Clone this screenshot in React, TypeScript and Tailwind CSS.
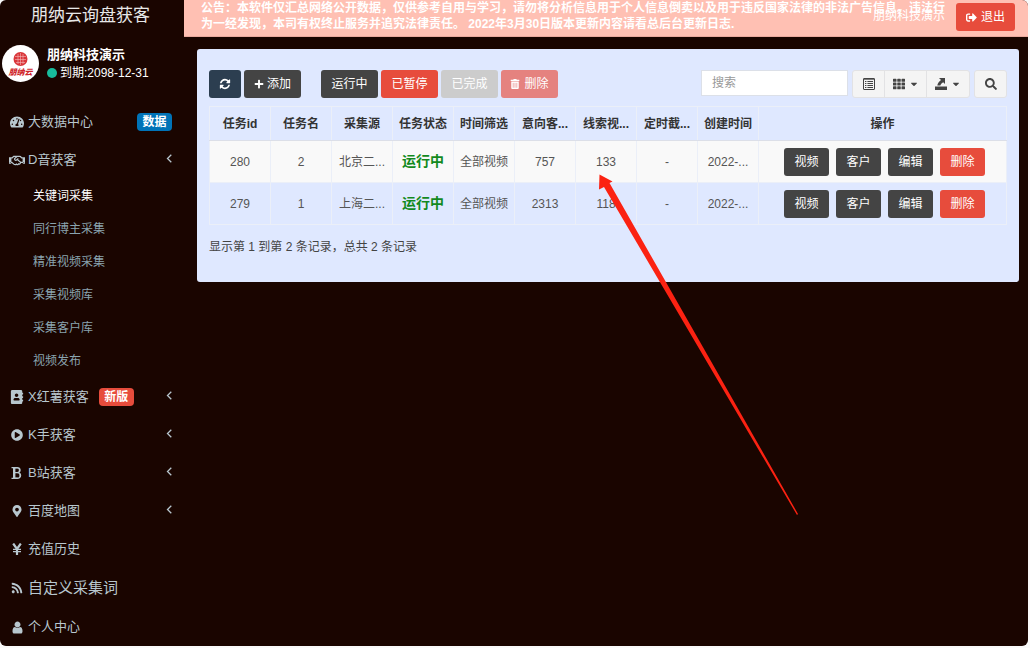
import type { ReactNode } from 'react';
import {
  FaAddressBook,
  FaCaretDown,
  FaMapMarkerAlt,
  FaPlayCircle,
  FaPlus,
  FaRegHandshake,
  FaRss,
  FaSearch,
  FaSignOutAlt,
  FaTachometerAlt,
  FaTh,
  FaTrashAlt,
} from 'react-icons/fa';

type NavItem = {
  label: string;
  icon: ReactNode;
  badge?: string;
  arrow?: boolean;
  large?: boolean;
  children?: string[];
};

const UserIcon = () => (
  <svg className="w-[13px] h-[13px]" viewBox="128 64 1536 1664" fill="currentColor">
    <path d="M1536 1399q0 109-62.5 187t-150.5 78h-854q-88 0-150.500-78t-62.500-187q0-85 8.500-160.500t31.500-152 58.500-131 94-89 134.500-34.500q131 128 313 128t313-128q76 0 134.500 34.500t94 89 58.500 131 31.500 152 8.500 160.500zm-256-887q0 159-112.500 271.500t-271.500 112.500-271.500-112.500-112.500-271.500 112.500-271.500 271.500-112.500 271.500 112.500 112.500 271.500z" />
  </svg>
);

const BoldIcon = () => (
  <svg className="w-3 h-3" viewBox="0 0 12 12" fill="none" stroke="currentColor">
    <path d="M0.500 0.700h6M0.500 11.300h6" strokeWidth="1.200" />
    <path d="M3.200 0.700v10.600" strokeWidth="2.400" />
    <path d="M4 0.700h2.200c3.600 0 3.600 4.900 0 4.900H4M6.200 5.600c4.400 0 4.400 5.700 0 5.700H4" strokeWidth="1.400" />
    <path d="M8.500 1.800v2.800M9.200 7v3" strokeWidth="1.400" />
  </svg>
);

const YenIcon = () => (
  <svg className="w-3 h-3" viewBox="0 0 12 12" fill="none" stroke="currentColor">
    <path d="M2.200 0.500L6 6L9.800 0.500M6 5.500V12" strokeWidth="2.200" />
    <path d="M2 6.300h8M2 8.600h8" strokeWidth="1.200" />
  </svg>
);

const ChevronIcon = () => (
  <svg className="w-[7px] h-[9px] ml-auto mb-1 -mr-px" viewBox="0 0 7 9" fill="none" stroke="currentColor" strokeWidth="1.300">
    <path d="M5.300 0.800L1.500 4.500L5.300 8.200" />
  </svg>
);

const RefreshIcon = () => (
  <svg className="w-3 h-3" viewBox="0 0 1792 1792" fill="currentColor">
    <path d="M1639 1056q0 5-1 7-64 268-268 434.5t-478 166.5q-146 0-282.5-55t-243.5-157l-129 129q-19 19-45 19t-45-19-19-45v-448q0-26 19-45t45-19h448q26 0 45 19t19 45-19 45l-137 137q71 66 161 102t187 36q134 0 250-65t186-179q11-17 53-117 8-23 30-23h192q13 0 22.5 9.5t9.5 22.5zm25-800v448q0 26-19 45t-45 19h-448q-26 0-45-19t-19-45 19-45l138-138q-148-137-349-137-134 0-250 65t-186 179q-11 17-53 117-8 23-30 23h-199q-13 0-22.5-9.5t-9.5-22.5v-7q65-268 270-434.5t480-166.5q146 0 284 55.5t245 156.5l130-129q19-19 45-19t45 19 19 45z" />
  </svg>
);

const ListIcon = () => (
  <svg className="w-3 h-3" viewBox="0 0 12 12" fill="none" stroke="currentColor">
    <rect x="0.5" y="0.5" width="11" height="11" rx="0.5" />
    <path d="M0.5 1.2h11M2 3.5h1.4M2 5.5h1.4M2 7.5h1.4M2 9.5h1.4M4.4 3.5h5.6M4.4 5.5h5.6M4.4 7.5h5.6M4.4 9.5h5.6" />
  </svg>
);

const ExportIcon = () => (
  <svg className="w-3 h-3" viewBox="0 0 12 12" fill="currentColor">
    <path d="M4 0h6v6L8.200 4.300C6.600 5.400 5.700 6.400 5.300 7.600H2.300C2.600 5.600 4 3.700 6 2.100zM0 8.500h12V12H0z" />
  </svg>
);

const Logo = () => (
  <svg className="w-[37px] h-[37px] shrink-0" viewBox="0 0 37 37" role="img" aria-label="朋纳云">
    <circle cx="18.500" cy="18.500" r="18.500" fill="#fff" />
    <circle cx="18.500" cy="14" r="7" fill="#d9363a" />
    <path d="M13 11.500h11M13 14.500h11M14 17.500h9M16 9v10M18.500 8v12M21 9v10" stroke="#f5b8b8" strokeWidth="0.600" fill="none" />
    <text x="18.500" y="30" textAnchor="middle" fontSize="8" fontWeight="900" fontStyle="italic" fill="#d0262b">
      朋纳云
    </text>
  </svg>
);

const navItems: NavItem[] = [
  { label: '大数据中心', icon: <FaTachometerAlt size={14} />, badge: '数据' },
  {
    label: 'D音获客',
    icon: <FaRegHandshake size={17} />,
    arrow: true,
    children: ['关键词采集', '同行博主采集', '精准视频采集', '采集视频库', '采集客户库', '视频发布'],
  },
  { label: 'X红薯获客', icon: <FaAddressBook size={14} />, badge: '新版', arrow: true },
  { label: 'K手获客', icon: <FaPlayCircle size={12} />, arrow: true },
  { label: 'B站获客', icon: <BoldIcon />, arrow: true },
  { label: '百度地图', icon: <FaMapMarkerAlt size={12} />, arrow: true },
  { label: '充值历史', icon: <YenIcon /> },
  { label: '自定义采集词', icon: <FaRss size={12} />, large: true },
  { label: '个人中心', icon: <UserIcon /> },
];

const columns = ['任务id', '任务名', '采集源', '任务状态', '时间筛选', '意向客...', '线索视...', '定时截...', '创建时间'];

const tasks = [
  { id: 280, name: '2', source: '北京二...', status: '运行中', range: '全部视频', leads: 757, videos: 133, deadline: '-', created: '2022-...' },
  { id: 279, name: '1', source: '上海二...', status: '运行中', range: '全部视频', leads: 2313, videos: 118, deadline: '-', created: '2022-...' },
];

const Sidebar = () => (
  <aside className="w-[184px] shrink-0 text-[#b8c7ce]">
    <h1 className="h-8 pl-[31px] text-[17px] leading-8 text-[#e8e8e8]">朋纳云询盘获客</h1>
    <div className="flex items-center gap-2 h-[71px] pt-[13px] pb-[21px] pl-0.5 text-white">
      <Logo />
      <div className="text-[12px] leading-[19px]">
        <p className="text-[13px] font-bold">朋纳科技演示</p>
        <p className="flex items-center gap-[3px]">
          <span className="w-2.5 h-2.5 rounded-full bg-[#18bc9c]" />
          到期:2098-12-31
        </p>
      </div>
    </div>
    <nav>
      {navItems.map((item) => (
        <div key={item.label}>
          <a
            href="#"
            className={`flex items-center pl-[9px] pr-3 ${item.large ? 'h-10 text-[15px]' : 'h-[38px] text-[13px]'}`}
          >
            <span className="flex justify-center w-4 mr-[3px] shrink-0">{item.icon}</span>
            {item.label}
            {item.badge && (
              <span
                className={`flex items-center justify-center w-[35px] h-[18px] rounded-sm text-[12px] font-bold text-white ${
                  item.arrow ? 'ml-2.5 bg-[#e74c3c]' : 'ml-auto bg-[#0073b7]'
                }`}
              >
                {item.badge}
              </span>
            )}
            {item.arrow && <ChevronIcon />}
          </a>
          {item.children && (
            <ul className="pb-px text-[12px] text-[#8aa4af]">
              {item.children.map((child, i) => (
                <li key={child}>
                  <a href="#" className={`flex items-center h-[33px] pl-[33px] ${i === 0 ? 'text-white' : ''}`}>
                    {child}
                  </a>
                </li>
              ))}
            </ul>
          )}
        </div>
      ))}
    </nav>
  </aside>
);

const Header = () => (
  <header className="relative flex items-start h-[37px] pl-[17px] pr-[13px] border-b border-[#e9a99d] bg-[#ffc0b3] text-[12px] text-white">
    <p className="flex-1 pr-1 font-bold leading-4">
      公告：本软件仅汇总网络公开数据，仅供参考自用与学习，请勿将分析信息用于个人信息倒卖以及用于违反国家法律的非法广告信息。违法行为一经发现，本司有权终止服务并追究法律责任。
      2022年3月30日版本更新内容请看总后台更新日志.
    </p>
    <a href="#" className="absolute right-[83px] top-2 leading-4">
      朋纳科技演示
    </a>
    <button className="flex items-center justify-center gap-1 w-[59px] h-7 mt-[3px] rounded-[3px] bg-[#e74c3c]">
      <FaSignOutAlt size={11} />
      退出
    </button>
  </header>
);

const Toolbar = () => (
  <div className="flex items-start text-[12px] text-white">
    <button aria-label="刷新" className="flex items-center justify-center w-8 h-7 rounded-[3px] bg-[#2c3e50]">
      <RefreshIcon />
    </button>
    <button className="flex items-center justify-center gap-[3px] w-[57px] h-7 ml-[3px] rounded-[3px] bg-[#444]">
      <FaPlus size={10} />
      添加
    </button>
    <div className="flex gap-[3px] ml-5">
      <button className="w-[57px] h-7 rounded-[3px] bg-[#444]">运行中</button>
      <button className="w-[57px] h-7 rounded-[3px] bg-[#e74c3c]">已暂停</button>
      <button disabled className="w-[57px] h-7 rounded-[3px] bg-[#ccc]">已完成</button>
      <button disabled className="flex items-center justify-center gap-1 w-[57px] h-7 rounded-[3px] bg-[#e5827f]">
        <FaTrashAlt size={10} />
        删除
      </button>
    </div>
    <input
      type="text"
      aria-label="搜索"
      placeholder="搜索"
      className="w-[147px] h-[26px] ml-auto px-2.5 border border-[#dce0e8] bg-white text-[#444] placeholder:text-[#999]"
    />
    <div className="flex h-7 ml-1 border border-[#e2e2e4] rounded-[3px] bg-[#f4f4f4] text-[#444] divide-x divide-[#e2e2e4]">
      <button aria-label="切换视图" className="flex items-center justify-center w-8">
        <ListIcon />
      </button>
      <button aria-label="列" className="flex items-center justify-center gap-1 w-[42px]">
        <FaTh size={12} />
        <FaCaretDown size={10} />
      </button>
      <button aria-label="导出" className="flex items-center justify-center gap-1 w-[42px]">
        <ExportIcon />
        <FaCaretDown size={10} />
      </button>
    </div>
    <button
      aria-label="普通搜索"
      className="flex items-center justify-center w-[33px] h-7 ml-1 border border-[#e2e2e4] rounded-[3px] bg-[#f4f4f4] text-[#444]"
    >
      <FaSearch size={12} />
    </button>
  </div>
);

const TaskTable = () => (
  <table className="w-full mt-2 table-fixed border-collapse text-center text-[12px] text-[#555]">
    <thead>
      <tr className="h-[34px] text-[#333]">
        {columns.map((col) => (
          <th key={col} className="w-[61px] border border-[#ebeff8] border-b-[#dcdfe8] font-bold whitespace-nowrap">
            {col}
          </th>
        ))}
        <th className="border border-[#ebeff8] border-b-[#dcdfe8] font-bold">操作</th>
      </tr>
    </thead>
    <tbody>
      {tasks.map((task) => (
        <tr key={task.id} className="h-[42px] odd:bg-[#f9f9f9] *:border *:border-[#ebeff8] *:whitespace-nowrap">
          <td>{task.id}</td>
          <td>{task.name}</td>
          <td>{task.source}</td>
          <td className="text-[14px] font-bold text-[#138a1e]">{task.status}</td>
          <td>{task.range}</td>
          <td>{task.leads}</td>
          <td>{task.videos}</td>
          <td>{task.deadline}</td>
          <td>{task.created}</td>
          <td>
            <div className="flex justify-center gap-[7px] pl-1 text-white">
              <button className="w-[45px] h-7 rounded-[3px] bg-[#444]">视频</button>
              <button className="w-[45px] h-7 rounded-[3px] bg-[#444]">客户</button>
              <button className="w-[45px] h-7 rounded-[3px] bg-[#444]">编辑</button>
              <button className="w-[45px] h-7 rounded-[3px] bg-[#e74c3c]">删除</button>
            </div>
          </td>
        </tr>
      ))}
    </tbody>
  </table>
);

// Callout arrow pointing at the lead video count
const PointerArrow = () => (
  <svg className="absolute left-[599px] top-[174px] w-[200px] h-[342px] pointer-events-none" viewBox="0 0 200 342">
    <path d="M0.500 0.500L13.500 7.500L10.500 9L199 340L198 341L5 13L0 15.500Z" fill="#fb2212" />
  </svg>
);

const App = () => (
  <div
    className="flex min-h-screen pr-0.5 pb-0.5 bg-[#fafafa]"
    style={{ fontFamily: '"Liberation Sans", "Noto Sans CJK SC", sans-serif' }}
  >
    <div className="relative flex flex-1 min-w-0 rounded-md overflow-hidden bg-[#1a0500]">
      <Sidebar />
      <div className="flex-1 min-w-0">
        <Header />
        <main className="mt-3 ml-[13px] mr-[9px] px-3 pt-[21px] pb-[25px] rounded-[3px] bg-[#dfe8ff]">
          <Toolbar />
          <TaskTable />
          <p className="mt-3 text-[12px] leading-5 text-[#444]">显示第 1 到第 2 条记录，总共 2 条记录</p>
        </main>
      </div>
      <PointerArrow />
    </div>
  </div>
);

export default App;
